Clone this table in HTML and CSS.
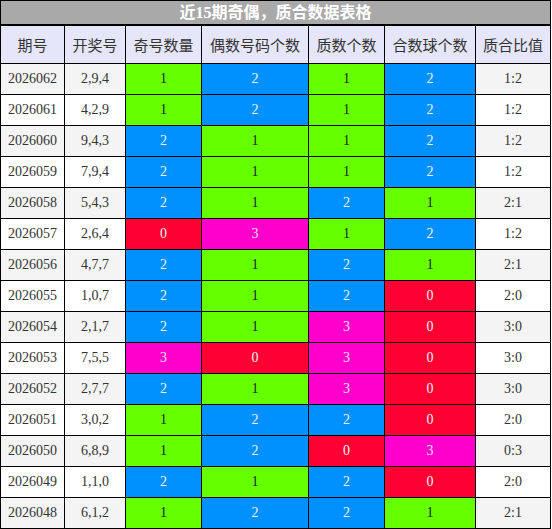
FILE: index.html
```html
<!DOCTYPE html>
<html lang="zh-CN">
<head>
<meta charset="utf-8">
<title>近15期奇偶，质合数据表格</title>
<link rel="stylesheet" href="styles.css">
</head>
<body>
<div class="board">
  <div class="title">近15期奇偶，质合数据表格</div>
  <table class="grid">
    <thead>
      <tr>
        <th class="c1">期号</th>
        <th class="c2">开奖号</th>
        <th class="c3">奇号数量</th>
        <th class="c4">偶数号码个数</th>
        <th class="c5">质数个数</th>
        <th class="c6">合数球个数</th>
        <th class="c7">质合比值</th>
      </tr>
    </thead>
    <tbody>
      <tr class="odd"><td>2026062</td><td>2,9,4</td><td class="v1">1</td><td class="v2">2</td><td class="v1">1</td><td class="v2">2</td><td>1:2</td></tr>
      <tr><td>2026061</td><td>4,2,9</td><td class="v1">1</td><td class="v2">2</td><td class="v1">1</td><td class="v2">2</td><td>1:2</td></tr>
      <tr class="odd"><td>2026060</td><td>9,4,3</td><td class="v2">2</td><td class="v1">1</td><td class="v1">1</td><td class="v2">2</td><td>1:2</td></tr>
      <tr><td>2026059</td><td>7,9,4</td><td class="v2">2</td><td class="v1">1</td><td class="v1">1</td><td class="v2">2</td><td>1:2</td></tr>
      <tr class="odd"><td>2026058</td><td>5,4,3</td><td class="v2">2</td><td class="v1">1</td><td class="v2">2</td><td class="v1">1</td><td>2:1</td></tr>
      <tr><td>2026057</td><td>2,6,4</td><td class="v0">0</td><td class="v3">3</td><td class="v1">1</td><td class="v2">2</td><td>1:2</td></tr>
      <tr class="odd"><td>2026056</td><td>4,7,7</td><td class="v2">2</td><td class="v1">1</td><td class="v2">2</td><td class="v1">1</td><td>2:1</td></tr>
      <tr><td>2026055</td><td>1,0,7</td><td class="v2">2</td><td class="v1">1</td><td class="v2">2</td><td class="v0">0</td><td>2:0</td></tr>
      <tr class="odd"><td>2026054</td><td>2,1,7</td><td class="v2">2</td><td class="v1">1</td><td class="v3">3</td><td class="v0">0</td><td>3:0</td></tr>
      <tr><td>2026053</td><td>7,5,5</td><td class="v3">3</td><td class="v0">0</td><td class="v3">3</td><td class="v0">0</td><td>3:0</td></tr>
      <tr class="odd"><td>2026052</td><td>2,7,7</td><td class="v2">2</td><td class="v1">1</td><td class="v3">3</td><td class="v0">0</td><td>3:0</td></tr>
      <tr><td>2026051</td><td>3,0,2</td><td class="v1">1</td><td class="v2">2</td><td class="v2">2</td><td class="v0">0</td><td>2:0</td></tr>
      <tr class="odd"><td>2026050</td><td>6,8,9</td><td class="v1">1</td><td class="v2">2</td><td class="v0">0</td><td class="v3">3</td><td>0:3</td></tr>
      <tr><td>2026049</td><td>1,1,0</td><td class="v2">2</td><td class="v1">1</td><td class="v2">2</td><td class="v0">0</td><td>2:0</td></tr>
      <tr class="odd"><td>2026048</td><td>6,1,2</td><td class="v1">1</td><td class="v2">2</td><td class="v2">2</td><td class="v1">1</td><td>2:1</td></tr>
    </tbody>
  </table>
</div>
</body>
</html>
```

FILE: styles.css
```css
html, body {
  margin: 0;
  padding: 0;
  background: #ffffff;
}

.board {
  width: 551px;
  font-family: "Liberation Serif", "Noto Sans CJK SC", serif;
  color: #333333;
}

.title {
  height: 23px;
  line-height: 23px;
  border: 1px solid #000000;
  border-bottom-width: 2px;
  background: #a9a9a9;
  color: #ffffff;
  font-weight: bold;
  font-size: 16px;
  text-align: center;
  font-family: "Liberation Serif", "Noto Sans CJK SC", sans-serif;
}

.grid {
  width: 551px;
  table-layout: fixed;
  border-collapse: separate;
  border-spacing: 0;
  border-left: 1px solid #000000;
}

.grid th,
.grid td {
  padding: 0;
  border-right: 1px solid #000000;
  border-bottom: 1px solid #000000;
  text-align: center;
  vertical-align: middle;
}

.grid th {
  height: 37px;
  background: #e6e6fa;
  font-family: "Noto Sans CJK SC", sans-serif;
  font-weight: normal;
  font-size: 15px;
  color: #333333;
}

.grid td {
  height: 30px;
  font-size: 14px;
  background: #ffffff;
}

.grid tr.odd td {
  background: #f4f4f4;
}

.c1 { width: 63px; }
.c2 { width: 60px; }
.c3 { width: 75px; }
.c4 { width: 106px; }
.c5 { width: 75px; }
.c6 { width: 90px; }
.c7 { width: 74px; }

.grid td.v0,
.grid tr.odd td.v0 {
  background: #ff0033;
  color: #f4f4f4;
}

.grid td.v1,
.grid tr.odd td.v1 {
  background: #66ff00;
  color: #222222;
}

.grid td.v2,
.grid tr.odd td.v2 {
  background: #0090ff;
  color: #eaf2ff;
}

.grid td.v3,
.grid tr.odd td.v3 {
  background: #ff00cc;
  color: #f8e0f4;
}
```
